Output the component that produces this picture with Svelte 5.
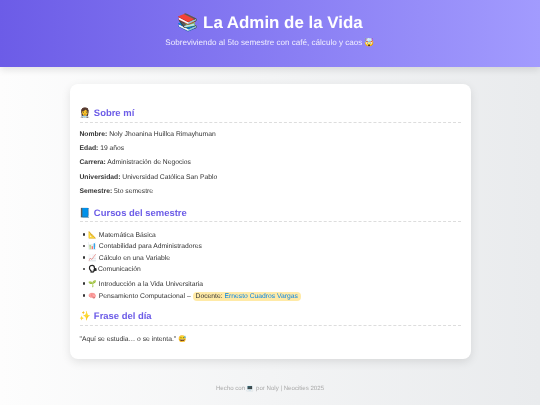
<script>
  const about = [
    ["Nombre:", "Noly Jhoanina Huillca Rimayhuman"],
    ["Edad:", "19 años"],
    ["Carrera:", "Administración de Negocios"],
    ["Universidad:", "Universidad Católica San Pablo"],
    ["Semestre:", "5to semestre"],
  ];
</script>

<div class="page">
  <header>
    <h1>📚 La Admin de la Vida</h1>
    <p>Sobreviviendo al 5to semestre con café, cálculo y caos 🤯</p>
  </header>

  <main>
    <section>
      <h2>👩‍⚕️ Sobre mí</h2>
      {#each about as [label, value]}
        <p class="row"><strong>{label}</strong> {value}</p>
      {/each}
    </section>

    <section>
      <h2>📘 Cursos del semestre</h2>
      <ul>
        <li>📐 Matemática Básica</li>
        <li>📊 Contabilidad para Administradores</li>
        <li>📈 Cálculo en una Variable</li>
        <li class="spaced"><span class="head">🗣</span> Comunicación</li>
        <li>🌱 Introducción a la Vida Universitaria</li>
        <li>🧠 Pensamiento Computacional – <span class="tag">Docente: <em>Ernesto Cuadros Vargas</em></span></li>
      </ul>
    </section>

    <section class="last">
      <h2>✨ Frase del día</h2>
      <p class="row quote">"Aquí se estudia… o se intenta." 😅</p>
    </section>
  </main>

  <footer>Hecho con 💻 por Noly | Neocities 2025</footer>
</div>

<style>
  :global(body) {
    margin: 0;
    font-family: "Liberation Sans", Arial, sans-serif;
    color: #333;
    text-rendering: geometricPrecision;
  }
  .page {
    height: 405px;
    overflow: hidden;
    background: linear-gradient(to right, #fdfdfd, #e9ebed);
    filter: blur(0.3px);
  }
  header {
    height: 67px;
    box-sizing: border-box;
    padding-top: 13px;
    text-align: center;
    color: #fff;
    background: linear-gradient(to right, #6c5ce7, #a29bfe);
    box-shadow: 0 3px 7px rgba(0, 0, 0, 0.1);
  }
  h1 { margin: 0; font-size: 16.9px; line-height: 20px; font-weight: 700; }
  header p { margin: 3.5px 0 0; font-size: 8.1px; line-height: 11px; color: #f0eeff; }
  main {
    width: 401px;
    box-sizing: border-box;
    margin: 17px auto 0;
    padding: 22px 10px 12px;
    background: #fff;
    border-radius: 8px;
    box-shadow: 0 3px 10px rgba(0, 0, 0, 0.1);
  }
  section { margin-top: 6px; }
  section:first-child { margin-top: 0; }
  section.last { margin-top: 7px; }
  h2 {
    margin: 0 0 5px;
    padding-bottom: 0.5px;
    font-size: 9.45px;
    line-height: 15px;
    color: #6c5ce7;
    border-bottom: 1px dashed #ddd;
  }
  .row { margin: 0; font-size: 6.75px; line-height: 14.4px; }
  .quote { margin-top: 7px; }
  ul {
    margin: 7.5px 0 0;
    padding-left: 9px;
    list-style: none;
    font-size: 6.75px;
    line-height: 11.6px;
  }
  li::before {
    content: "";
    display: inline-block;
    width: 2.5px;
    height: 2.5px;
    margin: 0 3.2px 1px -5.7px;
    border-radius: 50%;
    background: #333;
  }
  .spaced { margin: 0 0 3px; }
  .head { margin-right: -1px; color: #222; -webkit-text-stroke: 0.9px #222; }
  .tag {
    padding: 1px 3px;
    background: #ffeaa7;
    border-radius: 4px;
  }
  .tag em { font-style: normal; color: #0984e3; }
  footer {
    margin-top: 25px;
    text-align: center;
    font-size: 6.1px;
    line-height: 10px;
    color: #aaa;
  }
</style>
